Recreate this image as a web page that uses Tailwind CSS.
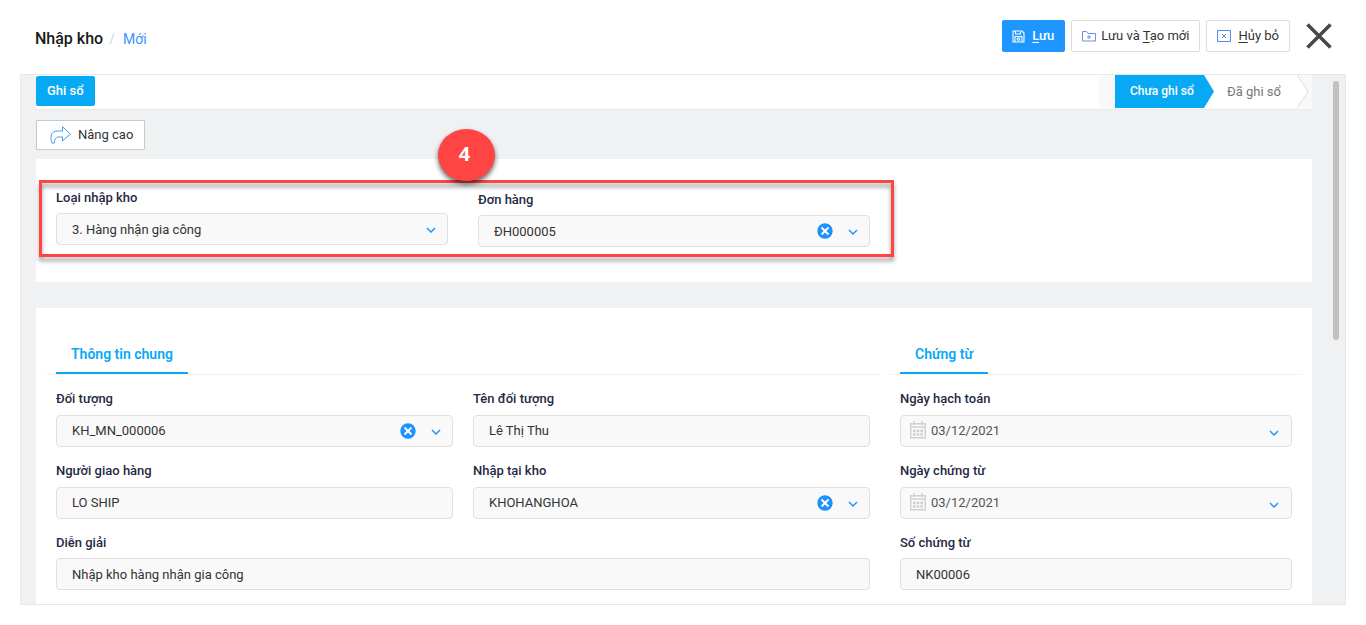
<!DOCTYPE html>
<html lang="vi">
<head>
<meta charset="utf-8">
<meta name="viewport" content="width=device-width, initial-scale=1">
<title>Nhập kho</title>
<script src="https://cdn.jsdelivr.net/npm/@tailwindcss/browser@4"></script>
</head>
<body class="bg-white font-['Roboto',sans-serif] text-[13px] leading-5 text-[#333]">
<svg class="hidden">
  <symbol id="chevron" viewBox="0 0 10 6"><path d="M1 1l4 4 4-4" fill="none" stroke="#1e96ff" stroke-width="1.5"/></symbol>
  <symbol id="clear" viewBox="0 0 16 16"><circle cx="8" cy="8" r="7.7" fill="#1e90ff"/><path d="M4.5 4.5l7 7M11.5 4.5l-7 7" stroke="#fff" stroke-width="1.9"/></symbol>
  <symbol id="calendar" viewBox="0 0 16 18"><path d="M.7 2.7h14.6v14H.7zM.7 6h14.6M4 0v4M12 0v4" fill="none" stroke="#d0d0d0" stroke-width="1.4"/><path d="M3 10h10M3 13.5h10" stroke="#d0d0d0" stroke-width="2.5" stroke-dasharray="2.6 1.1"/></symbol>
</svg>

<header class="flex h-[74px] items-start justify-between pl-[35px] pr-[34px]">
  <h1 class="flex items-baseline pt-[27px] text-base leading-6 font-medium text-[#1a1a1a]">Nhập kho<span class="ml-1.5 text-sm font-normal text-gray-300">/</span><a href="#" class="ml-2 text-sm font-normal text-[#3a92ff]">Mới</a></h1>
  <div class="flex items-center gap-1.5 pt-5">
    <button class="flex h-8 items-center rounded-xs bg-[#1e96ff] pl-2.5 pr-[11px] font-medium text-white">
      <svg class="mr-[7px] size-[13px]" viewBox="0 0 13 13" fill="none" stroke="currentColor" stroke-width="1.1"><path d="M1 1h9l2 2v9H1zM3.500 1v3h5V2M3 12V6.500h7V12"/><circle cx="6.500" cy="9" r="1.300"/></svg>
      <span><u class="underline-offset-2">L</u>ưu</span>
    </button>
    <button class="flex h-8 items-center rounded-xs border border-[#ddd] px-2.5">
      <svg class="mr-[5px] h-3 w-[14px]" viewBox="0 0 14 12" fill="none" stroke="#6d8fe0"><path d="M.5 11V1.500h4L6 3.500h7.500V11zM7 5v4M5 7h4"/></svg>
      <span>Lưu và <u class="underline-offset-2">T</u>ạo mới</span>
    </button>
    <button class="flex h-8 items-center rounded-xs border border-[#ddd] px-2.5">
      <svg class="mr-[7px] h-3 w-[14px]" viewBox="0 0 14 12" fill="none" stroke="#4b8fe8"><path d="M.5.5h13v11H.5zM5 4l4 4M9 4L5 8"/></svg>
      <span><u class="underline-offset-2">H</u>ủy bỏ</span>
    </button>
    <button aria-label="Đóng" class="ml-2.5"><svg class="size-[26px]" viewBox="0 0 26 26" stroke="#484848" stroke-width="3.5"><path d="M1.5 1.5l23 23M24.5 1.5l-23 23"/></svg></button>
  </div>
</header>

<main class="relative ml-5 mr-5 border border-[#e8e8e8] bg-[#f0f1f3] pl-[15px] pr-[33px]">
  <div class="absolute right-1.5 top-1.5 h-[259px] w-1.5 rounded-full bg-[#c1c1c1]"></div>

  <div class="flex h-[35px] items-start justify-between border-b border-[#e8e8e8] bg-white">
    <button class="mt-px h-[30px] rounded-xs bg-[#08a9f4] px-[11px] font-medium text-white">Ghi sổ</button>
    <div class="flex h-[33px] bg-white">
      <span class="w-4 rounded-l-sm bg-[#f8f8f8]"></span>
      <button class="w-[99px] bg-[#08a9f4] pl-[15px] pb-0.5 text-left text-xs font-medium text-white [clip-path:polygon(0_0,89px_0,100%_50%,89px_100%,0_100%)]">Chưa ghi sổ</button>
      <button class="pl-[13px] pr-4 text-[#777]">Đã ghi sổ</button>
      <svg class="h-[33px] w-[15px]" viewBox="0 0 15 33"><path d="M0 0h15v33H0l11-16.5z" fill="#f8f8f8"/><path d="M0 0l11 16.5L0 33" fill="none" stroke="#ddd"/></svg>
    </div>
  </div>

  <button class="mt-2.5 flex h-[30px] items-center rounded-[1px] border border-[#c8c8c8] bg-white pl-[13px] pr-[11px]">
    <svg class="mr-[7px] h-[18px] w-[21px]" viewBox="0 0 21 18" fill="none" stroke="#3f9df5" stroke-linejoin="round"><path d="M12.5.7l7.8 7.3-7.8 7V11H9c-3 0-4.5 1.500-4.500 6L2 17C-.5 10 1.500 5 7.500 5h5z"/></svg>
    Nâng cao
  </button>

  <section class="relative mt-[9px] grid grid-cols-3 gap-[30px] bg-white px-5 pt-[29px] pb-[35px]">
    <div class="pb-0.5">
      <label for="type" class="block font-medium text-[#1f2a44]">Loại nhập kho</label>
      <div class="relative mt-[5px]">
        <select id="type" class="block h-8 w-full appearance-none rounded border border-[#e0e0e0] bg-[#f9f9f9] px-[15px] pt-0.5"><option>3. Hàng nhận gia công</option></select>
        <svg class="pointer-events-none absolute right-3 top-3.5 h-1.5 w-2.5"><use href="#chevron"/></svg>
      </div>
    </div>
    <div class="pt-0.5">
      <label for="order" class="block font-medium text-[#1f2a44]">Đơn hàng</label>
      <div class="relative mt-[5px]">
        <select id="order" class="block h-8 w-full appearance-none rounded border border-[#e0e0e0] bg-[#f9f9f9] px-[15px] pt-0.5"><option>ĐH000005</option></select>
        <button aria-label="Xóa" class="absolute right-[37px] top-2"><svg class="size-4"><use href="#clear"/></svg></button>
        <svg class="pointer-events-none absolute right-3 top-3.5 h-1.5 w-2.5"><use href="#chevron"/></svg>
      </div>
    </div>
    <div class="pointer-events-none absolute left-[3px] top-[21px] h-[77px] w-[calc(66.66%+4px)] border-3 border-[#ff4444] [filter:drop-shadow(0_4px_2px_rgb(0_0_0/0.4))]"></div>
    <div class="absolute left-[402px] -top-[30px] flex h-[52px] w-[57px] items-center justify-center rounded-[50%] bg-[#ff4444] pr-1 pb-0.5 font-['Open_Sans',sans-serif] text-xl font-bold text-white shadow-[0_3px_5px_rgb(0_0_0/0.6)]">4</div>
  </section>

  <section class="mt-[26px] grid grid-cols-3 gap-x-[30px] bg-white px-5 pt-[26px] pb-3.5">
    <div class="col-span-2">
      <div class="-mx-2.5 border-b border-[#f1f1f1] px-2.5"><h2 class="flex h-10 w-fit items-center border-b-2 border-[#08a9f4] px-[15px] pt-0.5 text-sm font-semibold text-[#08a9f4]">Thông tin chung</h2></div>
      <div class="mt-3.5 grid grid-cols-2 gap-x-5 gap-y-3.5">
        <div>
          <label for="object" class="block font-medium text-[#1f2a44]">Đối tượng</label>
          <div class="relative mt-1.5">
            <select id="object" class="block h-8 w-full appearance-none rounded border border-[#e0e0e0] bg-[#f9f9f9] px-[15px]"><option>KH_MN_000006</option></select>
            <button aria-label="Xóa" class="absolute right-[37px] top-2"><svg class="size-4"><use href="#clear"/></svg></button>
            <svg class="pointer-events-none absolute right-3 top-3.5 h-1.5 w-2.5"><use href="#chevron"/></svg>
          </div>
        </div>
        <div>
          <label for="name" class="block font-medium text-[#1f2a44]">Tên đối tượng</label>
          <input id="name" value="Lê Thị Thu" class="mt-1.5 block h-8 w-full rounded border border-[#e0e0e0] bg-[#f9f9f9] px-[15px] pb-0.5">
        </div>
        <div>
          <label for="shipper" class="block font-medium text-[#1f2a44]">Người giao hàng</label>
          <input id="shipper" value="LO SHIP" class="mt-1.5 block h-8 w-full rounded border border-[#e0e0e0] bg-[#f9f9f9] px-[15px] pb-0.5">
        </div>
        <div>
          <label for="store" class="block font-medium text-[#1f2a44]">Nhập tại kho</label>
          <div class="relative mt-1.5">
            <select id="store" class="block h-8 w-full appearance-none rounded border border-[#e0e0e0] bg-[#f9f9f9] px-[15px]"><option>KHOHANGHOA</option></select>
            <button aria-label="Xóa" class="absolute right-[37px] top-2"><svg class="size-4"><use href="#clear"/></svg></button>
            <svg class="pointer-events-none absolute right-3 top-3.5 h-1.5 w-2.5"><use href="#chevron"/></svg>
          </div>
        </div>
        <div class="col-span-2">
          <label for="note" class="block font-medium text-[#1f2a44]">Diễn giải</label>
          <input id="note" value="Nhập kho hàng nhận gia công" class="mt-[5px] block h-8 w-full rounded border border-[#e0e0e0] bg-[#f9f9f9] px-[15px]">
        </div>
      </div>
    </div>
    <div>
      <div class="-mx-2.5 border-b border-[#f1f1f1] px-2.5"><h2 class="flex h-10 w-fit items-center border-b-2 border-[#08a9f4] px-[15px] pt-0.5 text-sm font-semibold text-[#08a9f4]">Chứng từ</h2></div>
      <div class="mt-3.5 grid gap-y-3.5">
        <div>
          <label for="posted" class="block font-medium text-[#1f2a44]">Ngày hạch toán</label>
          <div class="relative mt-1.5">
            <input id="posted" value="03/12/2021" class="block h-8 w-full rounded border border-[#e0e0e0] bg-[#f9f9f9] px-[30px] pb-0.5 text-[#555]">
            <svg class="pointer-events-none absolute right-[13px] top-[15px] h-1.5 w-2.5"><use href="#chevron"/></svg>
            <svg class="pointer-events-none absolute left-2.5 top-1.5 h-[18px] w-4"><use href="#calendar"/></svg>
          </div>
        </div>
        <div>
          <label for="dated" class="block font-medium text-[#1f2a44]">Ngày chứng từ</label>
          <div class="relative mt-1.5">
            <input id="dated" value="03/12/2021" class="block h-8 w-full rounded border border-[#e0e0e0] bg-[#f9f9f9] px-[30px] pb-0.5 text-[#555]">
            <svg class="pointer-events-none absolute right-[13px] top-[15px] h-1.5 w-2.5"><use href="#chevron"/></svg>
            <svg class="pointer-events-none absolute left-2.5 top-1.5 h-[18px] w-4"><use href="#calendar"/></svg>
          </div>
        </div>
        <div>
          <label for="number" class="block font-medium text-[#1f2a44]">Số chứng từ</label>
          <input id="number" value="NK00006" class="mt-[5px] block h-8 w-full rounded border border-[#e0e0e0] bg-[#f9f9f9] px-[15px]">
        </div>
      </div>
    </div>
  </section>
</main>
</body>
</html>
